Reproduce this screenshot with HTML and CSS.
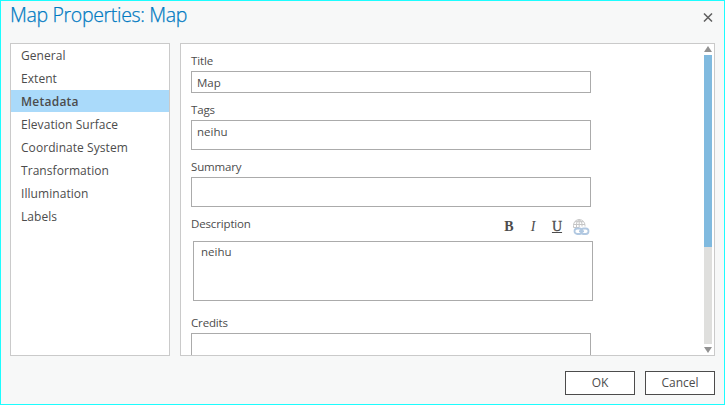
FILE: index.html
```html
<!DOCTYPE html>
<html lang="en">
<head>
<meta charset="utf-8">
<title>Map Properties: Map</title>
<link rel="stylesheet" href="styles.css">
</head>
<body>
<div class="dialog">
  <header class="titlebar">
    <h1>Map Properties: Map</h1>
    <svg class="close" width="10" height="9" viewBox="0 0 10 9"><path d="M1 .5 9 8.500M9 .5 1 8.500"/></svg>
  </header>
  <main class="content">
    <nav class="sidebar">
      <a>General</a>
      <a>Extent</a>
      <a class="selected">Metadata</a>
      <a>Elevation Surface</a>
      <a>Coordinate System</a>
      <a>Transformation</a>
      <a>Illumination</a>
      <a>Labels</a>
    </nav>
    <section class="panel">
      <div class="form">
        <div class="field"><label>Title</label><div class="box line">Map</div></div>
        <div class="field"><label>Tags</label><div class="box">neihu</div></div>
        <div class="field"><label>Summary</label><div class="box"></div></div>
        <div class="field description">
          <div class="label-row">
            <label>Description</label>
            <div class="tools">
              <span class="bold">B</span>
              <span class="italic">I</span>
              <span class="underline">U</span>
              <svg width="17" height="17" viewBox="0 0 17 17">
                <g class="globe"><path d="M.5 8.500V6.500C.5 3 3 .6 6.200 .6S12 3 12 6.500V7.500M6.200 .6V8.500M.5 8.500H6M.5 5.500H12M2 2.700H10.500M3.500 8.500V5.500C3.500 3.500 4.500 1.500 6.200 .6C8 1.500 9 3.500 9 5.500V7.500"/></g>
                <g class="link"><rect x="1.500" y="9.500" width="7.500" height="5.500" rx="2.700"/><rect x="8" y="9.500" width="7.500" height="5.500" rx="2.700"/><path d="M6 12.250H11"/></g>
              </svg>
            </div>
          </div>
          <div class="box">neihu</div>
        </div>
        <div class="field credits"><label>Credits</label><div class="box"></div></div>
      </div>
      <div class="scrollbar">
        <svg width="8" height="6" viewBox="0 0 8 6"><path d="M4 0 8 6H0Z"/></svg>
        <div class="track"><div class="thumb"></div></div>
        <svg width="8" height="6" viewBox="0 0 8 6"><path d="M0 0H8L4 6Z"/></svg>
      </div>
    </section>
  </main>
  <footer class="actions">
    <button>OK</button>
    <button>Cancel</button>
  </footer>
</div>
</body>
</html>
```
FILE: styles.css
```css
* { box-sizing: border-box; }
body {
  margin: 0;
  font: 12px/20px "Open Sans", "Noto Sans", sans-serif;
  color: #4c4c4c;
}
.dialog {
  width: 725px;
  height: 405px;
  display: flex;
  flex-direction: column;
  padding: 0 9px 9px;
  border: 1px solid #1cfdff;
  background: #f7f8f8;
}
.titlebar {
  height: 42px;
  display: flex;
  justify-content: space-between;
}
h1 {
  margin: 0;
  font-size: 19.500px;
  line-height: 28px;
  font-weight: 300;
  letter-spacing: -.33px;
  color: #007ac2;
  -webkit-text-stroke: .25px #007ac2;
}
.close { margin: 12px 2px 0 0; }
.close path { stroke: #5f5f5f; stroke-width: 1.5; fill: none; }
.content {
  height: 313px;
  display: grid;
  grid-template-columns: 160px 535px;
  gap: 10px;
}
.sidebar, .panel { border: 1px solid #cacaca; background: #fff; }
.sidebar {
  display: flex;
  flex-direction: column;
  gap: 1px;
}
.sidebar a {
  height: 22px;
  line-height: 22px;
  padding-left: 10px;
  letter-spacing: .06px;
}
.sidebar a:first-child { margin-top: 1px; }
.sidebar .selected { background: #aadafa; font-weight: 600; margin-bottom: 1px; line-height: 24px; letter-spacing: .25px; }
.sidebar a:nth-child(2) { margin-bottom: -1px; }
.panel {
  display: flex;
  justify-content: space-between;
  overflow: hidden;
}
.form { width: 412px; height: 311px; padding: 7px 0 0 10px; overflow: hidden; }
.field { margin-bottom: 7px; }
label { display: block; height: 20px; font-size: 11.500px; letter-spacing: -.15px; }
.box {
  width: 400px;
  height: 30px;
  padding: 1px 5px;
  border: 1px solid #ababab;
  font-size: 11.500px;
}
.box.line { height: 22px; }
.label-row { width: 400px; display: flex; justify-content: space-between; height: 27px; }
.description { margin-bottom: 12px; }
.description .box { height: 60px; margin-left: 2px; padding: 0 7px; }
.tools {
  display: flex;
  align-items: center;
  height: 26px;
  font: bold 14px/20px "Liberation Serif", serif;
}
.tools span { width: 24px; text-align: center; }
.tools .italic { font-weight: normal; font-style: italic; }
.tools .underline { font-weight: normal; text-decoration: underline; -webkit-text-stroke: .3px #4c4c4c; }
.tools svg { margin: 0 1px 0 4px; }
.globe { fill: none; stroke: #c6c6c6; stroke-width: 1; }
.link { fill: none; stroke: #b1c8e1; stroke-width: 1.8; }
.credits .box { height: 60px; }
.scrollbar {
  width: 8px;
  height: 311px;
  margin-right: 2px;
  padding: 2px 0;
  display: flex;
  flex-direction: column;
  justify-content: space-between;
}
.scrollbar svg { display: block; fill: #929292; }
.track { height: 289px; background: #dfdfdd; }
.thumb { height: 192px; background: #80badf; }
.actions {
  display: flex;
  justify-content: flex-end;
  gap: 10px;
  margin-top: 15px;
}
button {
  width: 70px;
  height: 24px;
  padding: 0;
  border: 1px solid #4c4c4c;
  background: #fff;
  color: #4c4c4c;
  font: inherit;
}
```
